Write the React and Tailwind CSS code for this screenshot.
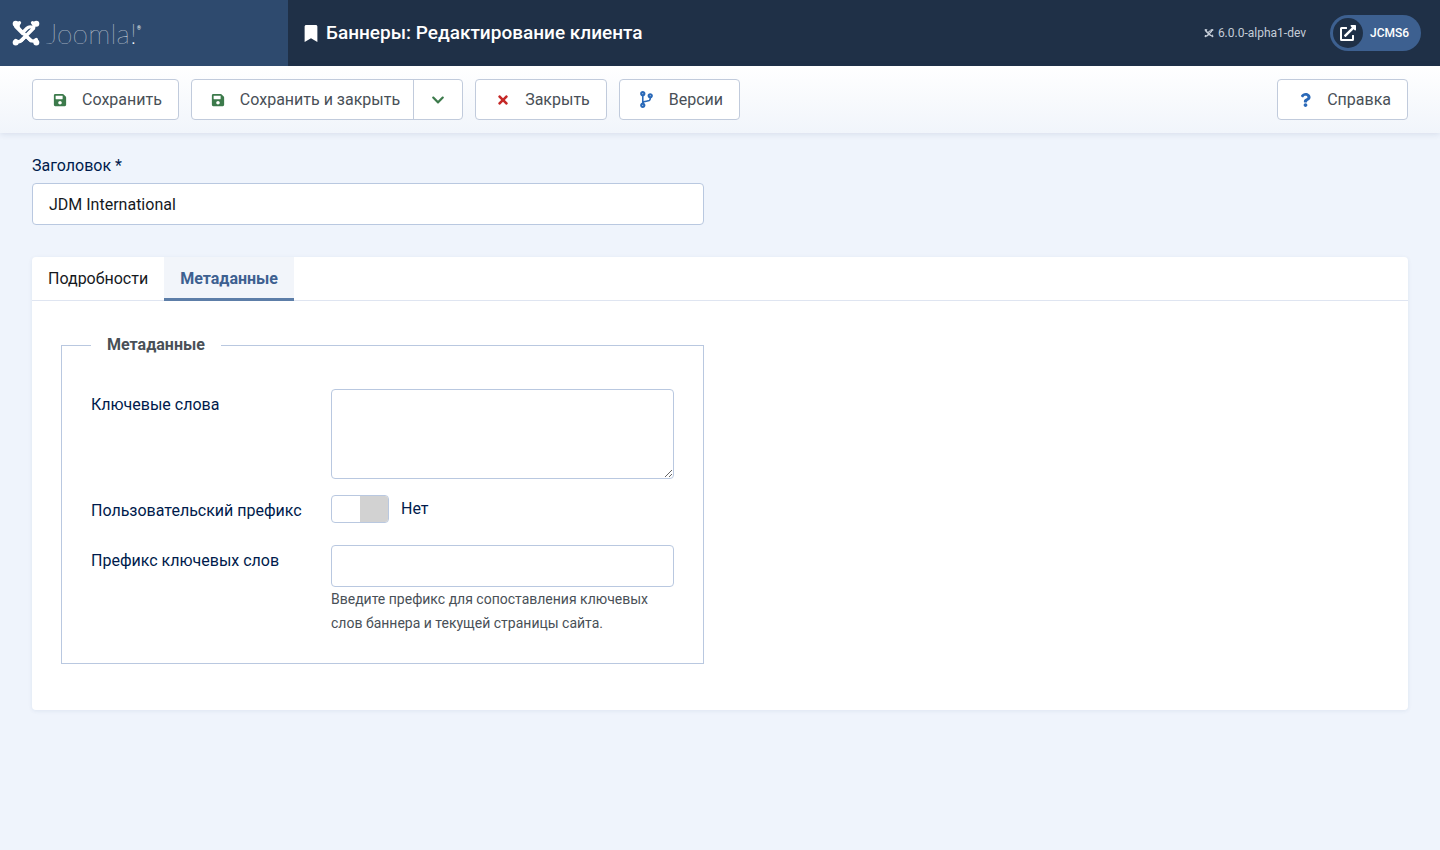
import { FaSave, FaTimes, FaCodeBranch, FaQuestion, FaBookmark, FaChevronDown, FaExternalLinkAlt } from "react-icons/fa";

function JoomlaMark({ className }) {
  // four interlocking strokes with round ends
  return (
    <svg viewBox="0 0 32 32" className={className} fill="none" stroke="currentColor" strokeLinecap="round">
      <path d="M5 9l7 7 5-5c2-2 5-2 7 0" strokeWidth="3.6" />
      <path d="M9 5c-2 2-2 5 0 7l12 12" strokeWidth="3.6" />
      <path d="M23 5c2 2 2 5 0 7L11 24" strokeWidth="3.6" />
      <path d="M27 23c-2 2-5 2-7 0l-4-4-5 5c-1.500 1.500-4 2-6 0" strokeWidth="3.6" />
      <circle cx="5" cy="6" r="3.2" fill="currentColor" stroke="none" />
      <circle cx="27" cy="6" r="3.2" fill="currentColor" stroke="none" />
      <circle cx="5" cy="26" r="3.2" fill="currentColor" stroke="none" />
      <circle cx="27" cy="26" r="3.2" fill="currentColor" stroke="none" />
    </svg>
  );
}

function ToolButton({ icon, label, iconClass }) {
  return (
    <button className="h-[41px] flex items-center pl-[18px] pr-4 bg-white border border-[#c1cbdc] rounded text-[#495057] text-base whitespace-nowrap">
      <span className={`w-[18px] flex justify-center mr-[13px] ${iconClass}`}>{icon}</span>
      {label}
    </button>
  );
}

export default function App() {
  return (
    <div className="min-h-[850px] bg-[#eff4fc] font-['Roboto',sans-serif] text-base">
      {/* Header */}
      <header className="h-[66px] bg-[#1f3047] flex items-center text-white">
        <div className="w-[288px] h-full bg-[#2e4a6e] flex items-center pl-[11px]">
          <JoomlaMark className="w-[30px] h-[30px]" />
          <span className="ml-[5px] font-['Lato',sans-serif] font-thin text-[28px] leading-none tracking-[0.2px]">Joomla!</span>
          <span className="text-[5px] self-start mt-[25px]">®</span>
        </div>
        <div className="flex items-center ml-4 flex-1">
          <FaBookmark className="w-[14px] h-[17px]" />
          <h1 className="ml-2 text-[19px] font-medium">Баннеры: Редактирование клиента</h1>
        </div>
        <div className="flex items-center gap-1 text-xs text-[#c5cdd8] mr-6">
          <JoomlaMark className="w-[10px] h-[10px]" />
          <span>6.0.0-alpha1-dev</span>
        </div>
        <div className="h-9 w-[91px] mr-[19px] rounded-full bg-[#3d6090] flex items-center pl-[3px]">
          <span className="w-[30px] h-[30px] rounded-full bg-[#1f3047] flex items-center justify-center">
            <FaExternalLinkAlt className="w-4 h-4" />
          </span>
          <span className="ml-[7px] text-xs font-medium">JCMS6</span>
        </div>
      </header>

      {/* Toolbar */}
      <div className="h-[67px] bg-gradient-to-b from-white to-[#f1f5fb] shadow-[0_1px_6px_rgba(30,60,110,0.12)] flex items-center px-8 gap-3">
        <ToolButton icon={<FaSave className="w-[14px] h-[14px]" />} label="Сохранить" iconClass="text-[#3c7a4b]" />
        <div className="h-[41px] flex bg-white border border-[#c1cbdc] rounded text-[#495057] whitespace-nowrap">
          <div className="flex items-center pl-[17px] pr-[13px]">
            <span className="w-[18px] flex justify-center mr-[13px] text-[#3c7a4b]"><FaSave className="w-[14px] h-[14px]" /></span>
            Сохранить и закрыть
          </div>
          <div className="w-[49px] border-l border-[#c1cbdc] flex items-center justify-center text-[#3c7a4b]">
            <FaChevronDown className="w-[14px] h-[14px]" />
          </div>
        </div>
        <ToolButton icon={<FaTimes className="w-[14px] h-[14px]" />} label="Закрыть" iconClass="text-[#c52827]" />
        <ToolButton icon={<FaCodeBranch className="w-[15px] h-[17px]" />} label="Версии" iconClass="text-[#2a69b8]" />
        <div className="ml-auto">
          <ToolButton icon={<FaQuestion className="w-[13px] h-[14px]" />} label="Справка" iconClass="text-[#2a69b8]" />
        </div>
      </div>

      {/* Content */}
      <main className="px-8 pt-[21px]">
        <label className="block text-[#001b4c] leading-6 mb-[5px]">Заголовок *</label>
        <input
          defaultValue="JDM International"
          className="block w-[672px] h-[42px] px-4 bg-white border border-[#b9c8e0] rounded text-[#16191d] outline-none"
        />

        <div className="mt-8 bg-white rounded shadow-[0_1px_4px_rgba(30,60,110,0.08)] pb-[46px]">
          <div className="h-[44px] flex border-b border-[#dfe5f1]">
            <div className="px-4 flex items-center text-[#16191d]">Подробности</div>
            <div className="px-4 flex items-center font-bold text-[#3d6090] bg-[#f2f5fa] border-b-[3px] border-[#5d7ea8] h-[44px] pt-[3px]">Метаданные</div>
          </div>

          <div className="pt-[32px] pl-[29px]">
            <fieldset className="w-[643px] h-[331px] border border-[#b9c8e0] px-[29px] pt-[32px]">
              <legend className="ml-0 px-4 font-bold text-[#495057] leading-6">Метаданные</legend>

              <div className="flex">
                <label className="w-[240px] pt-[4px] text-[#001b4c] leading-6">Ключевые слова</label>
                <textarea className="block w-[343px] h-[90px] bg-white border border-[#b9c8e0] rounded outline-none" />
              </div>

              <div className="flex mt-4">
                <label className="w-[240px] pt-[4px] text-[#001b4c] leading-6">Пользовательский префикс</label>
                <div className="flex items-center">
                  <div className="w-[58px] h-[28px] border border-[#b9c8e0] rounded bg-white overflow-hidden flex justify-end">
                    <div className="w-[28px] h-full bg-[#d2d2d2]" />
                  </div>
                  <span className="ml-3 text-[#001b4c]">Нет</span>
                </div>
              </div>

              <div className="flex mt-[22px]">
                <label className="w-[240px] pt-[4px] text-[#001b4c] leading-6">Префикс ключевых слов</label>
                <div className="w-[343px]">
                  <input className="block w-full h-[42px] bg-white border border-[#b9c8e0] rounded outline-none" />
                  <p className="text-sm leading-6 text-[#495057]">
                    Введите префикс для сопоставления ключевых слов баннера и текущей страницы сайта.
                  </p>
                </div>
              </div>
            </fieldset>
          </div>
        </div>
      </main>
    </div>
  );
}
